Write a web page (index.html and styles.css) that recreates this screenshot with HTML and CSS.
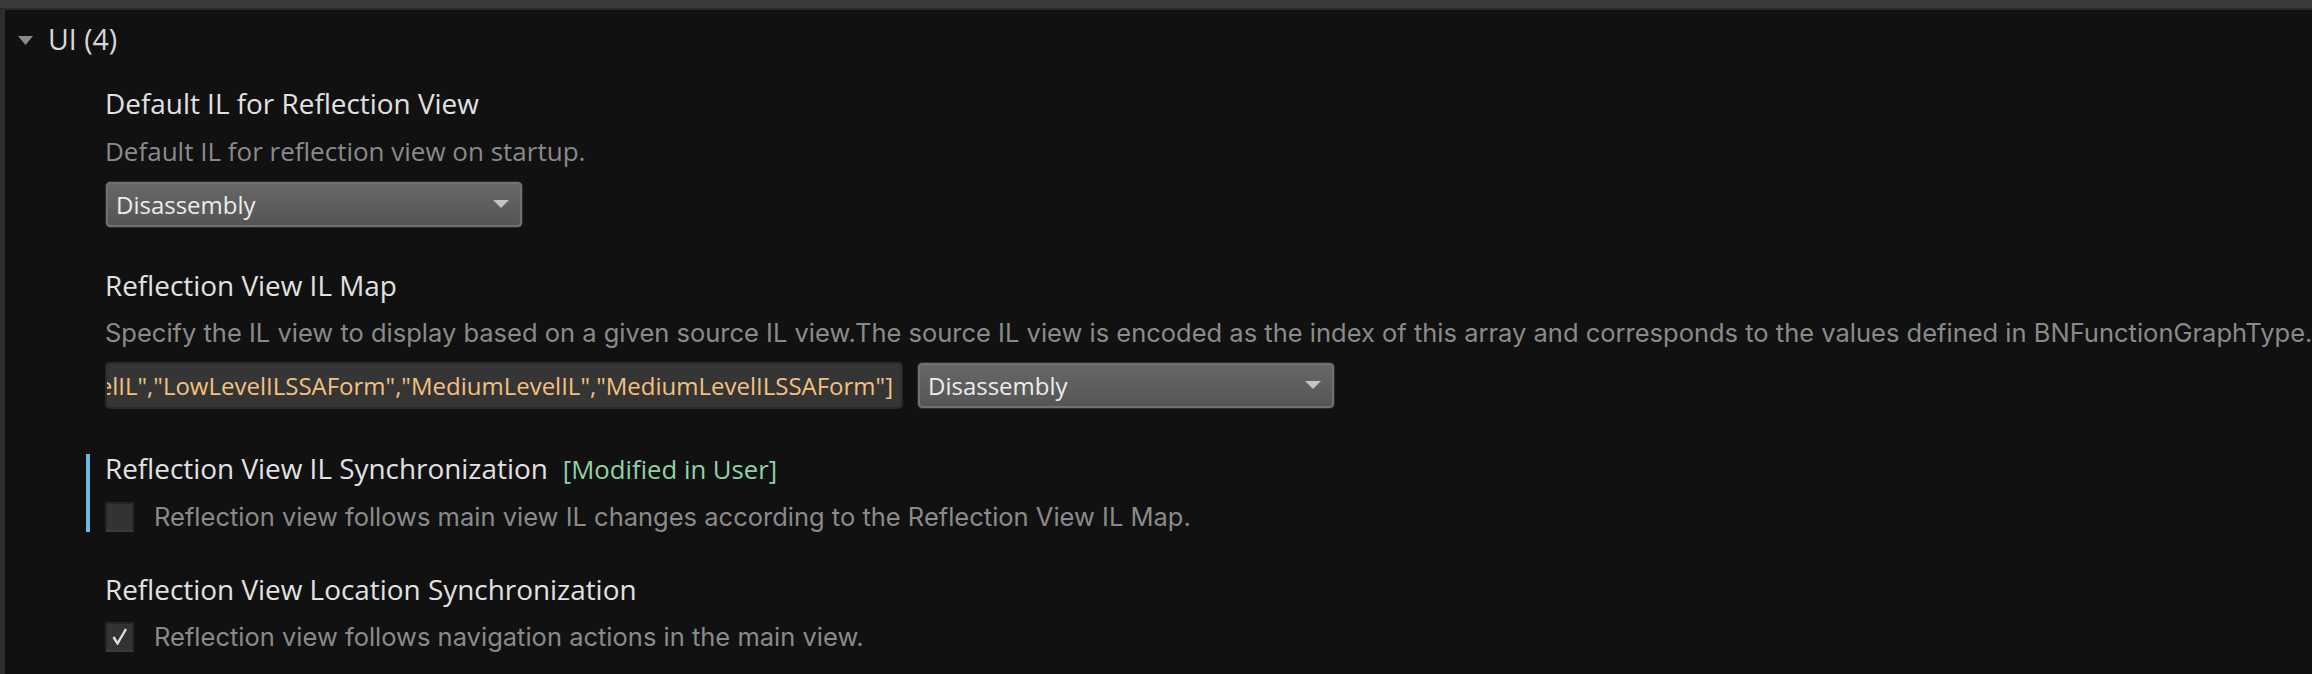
FILE: index.html
```html
<!DOCTYPE html>
<html>
<head>
<meta charset="utf-8">
<link rel="stylesheet" href="styles.css">
</head>
<body>
<div class="topbar"></div>
<div class="panel">
  <div class="group-header">
    <svg class="caret" width="15" height="9" viewBox="0 0 15 9"><path d="M0 0 H15 L7.5 9 Z" fill="#8a8a8a"/></svg>
    <span class="group-title">UI (4)</span>
  </div>
  <div class="settings">
    <div class="setting s1">
      <div class="title">Default IL for Reflection View</div>
      <div class="desc desc-os">Default IL for reflection view on startup.</div>
      <div class="select">
        <span class="select-text">Disassembly</span>
        <svg class="arrow" width="16" height="8" viewBox="0 0 16 8"><path d="M0 0 H16 L8 8 Z" fill="#c4c4c4"/></svg>
      </div>
    </div>
    <div class="setting s2">
      <div class="title">Reflection View IL Map</div>
      <div class="desc desc-sys">Specify the IL view to display based on a given source IL view.The source IL view is encoded as the index of this array and corresponds to the values defined in BNFunctionGraphType.</div>
      <div class="map-row">
        <div class="textfield"><span class="tf-text">["Disassembly","LowLevelIL","LowLevelILSSAForm","MediumLevelIL","MediumLevelILSSAForm"]</span></div>
        <div class="select">
          <span class="select-text">Disassembly</span>
          <svg class="arrow" width="16" height="8" viewBox="0 0 16 8"><path d="M0 0 H16 L8 8 Z" fill="#c4c4c4"/></svg>
        </div>
      </div>
    </div>
    <div class="setting s3 modified">
      <div class="title">Reflection View IL Synchronization<span class="mod-tag">[Modified in User]</span></div>
      <div class="check-row">
        <span class="checkbox"></span>
        <span class="check-label">Reflection view follows main view IL changes according to the Reflection View IL Map.</span>
      </div>
    </div>
    <div class="setting s4">
      <div class="title">Reflection View Location Synchronization</div>
      <div class="check-row">
        <span class="checkbox"><svg width="16" height="17" viewBox="0 0 16 17"><polyline points="1.5,9 5.5,15.5 14,1" fill="none" stroke="#dedede" stroke-width="2.4" stroke-linejoin="miter"/></svg></span>
        <span class="check-label">Reflection view follows navigation actions in the main view.</span>
      </div>
    </div>
  </div>
</div>
</body>
</html>
```

FILE: styles.css
```css
html, body {
  margin: 0;
  padding: 0;
  background: #111111;
  overflow: hidden;
}
body {
  width: 2312px;
  height: 674px;
  font-family: "Open Sans", sans-serif;
}
.topbar {
  height: 8px;
  background: #3a3a3a;
  border-bottom: 2px solid #2a2a2a;
}
.panel {
  border-left: 5px solid #2d2d2d;
  height: 664px;
  box-sizing: border-box;
  background: #111111;
}
.group-header {
  display: flex;
  align-items: center;
  padding-left: 13px;
  padding-top: 11px;
  height: 36px;
}
.caret {
  margin-right: 15px;
  margin-top: 2px;
}
.group-title {
  font-size: 28.5px;
  line-height: 36px;
  color: #d8d8d8;
}
.settings {
  padding-left: 100px;
}
.setting {
  display: flex;
  flex-direction: column;
  align-items: flex-start;
}
.title {
  font-size: 27.9px;
  line-height: 28px;
  color: #e2e2e2;
  white-space: nowrap;
}
.mod-tag {
  color: #8fd3a3;
  font-size: 25.7px;
  margin-left: 15px;
}
.desc {
  color: #8a8a8a;
  white-space: nowrap;
  line-height: 28px;
}
.desc-os {
  font-size: 26px;
  margin-top: 20px;
}
.desc-sys {
  font-family: "Inter", "Liberation Sans", sans-serif;
  font-size: 25.5px;
  margin-top: 20px;
}
.s1 { margin-top: 32px; }
.s2 { margin-top: 43px; }
.s3 { margin-top: 45px; }
.s4 { margin-top: 43px; }
.select {
  box-sizing: border-box;
  width: 418px;
  height: 47px;
  border-radius: 5px;
  border: 1px solid #2a2a2a;
  box-shadow: inset 0 0 0 2px #717171;
  background: linear-gradient(#686868, #545454);
  display: flex;
  align-items: center;
  justify-content: space-between;
  padding: 0 13px 0 10px;
}
.s1 .select { margin-top: 16px; }
.select-text {
  font-size: 24px;
  color: #ececec;
}
.arrow {
  margin-top: -2px;
}
.map-row {
  display: flex;
  gap: 14px;
  margin-top: 15px;
}
.textfield {
  box-sizing: border-box;
  width: 798px;
  height: 47px;
  border-radius: 5px;
  border: 2px solid #2a2a2a;
  background: #353535;
  display: flex;
  justify-content: flex-end;
  align-items: center;
  overflow: hidden;
  padding-right: 8px;
}
.tf-text {
  font-size: 24px;
  color: #f3c17e;
  white-space: nowrap;
  flex-shrink: 0;
}
.modified {
  margin-left: -19px;
  padding-left: 15px;
  border-left: 4px solid #6bbde6;
}
.check-row {
  display: flex;
  align-items: center;
  margin-top: 17px;
}
.checkbox {
  box-sizing: border-box;
  width: 29px;
  height: 30px;
  background: #333333;
  border: 2px solid #262626;
  border-bottom-color: #3b3b3b;
  display: flex;
  align-items: center;
  justify-content: center;
}
.check-label {
  font-family: "Inter", "Liberation Sans", sans-serif;
  font-size: 25.5px;
  color: #8a8a8a;
  margin-left: 20px;
  white-space: nowrap;
}
.s4 .check-row { margin-top: 18px; }
```
